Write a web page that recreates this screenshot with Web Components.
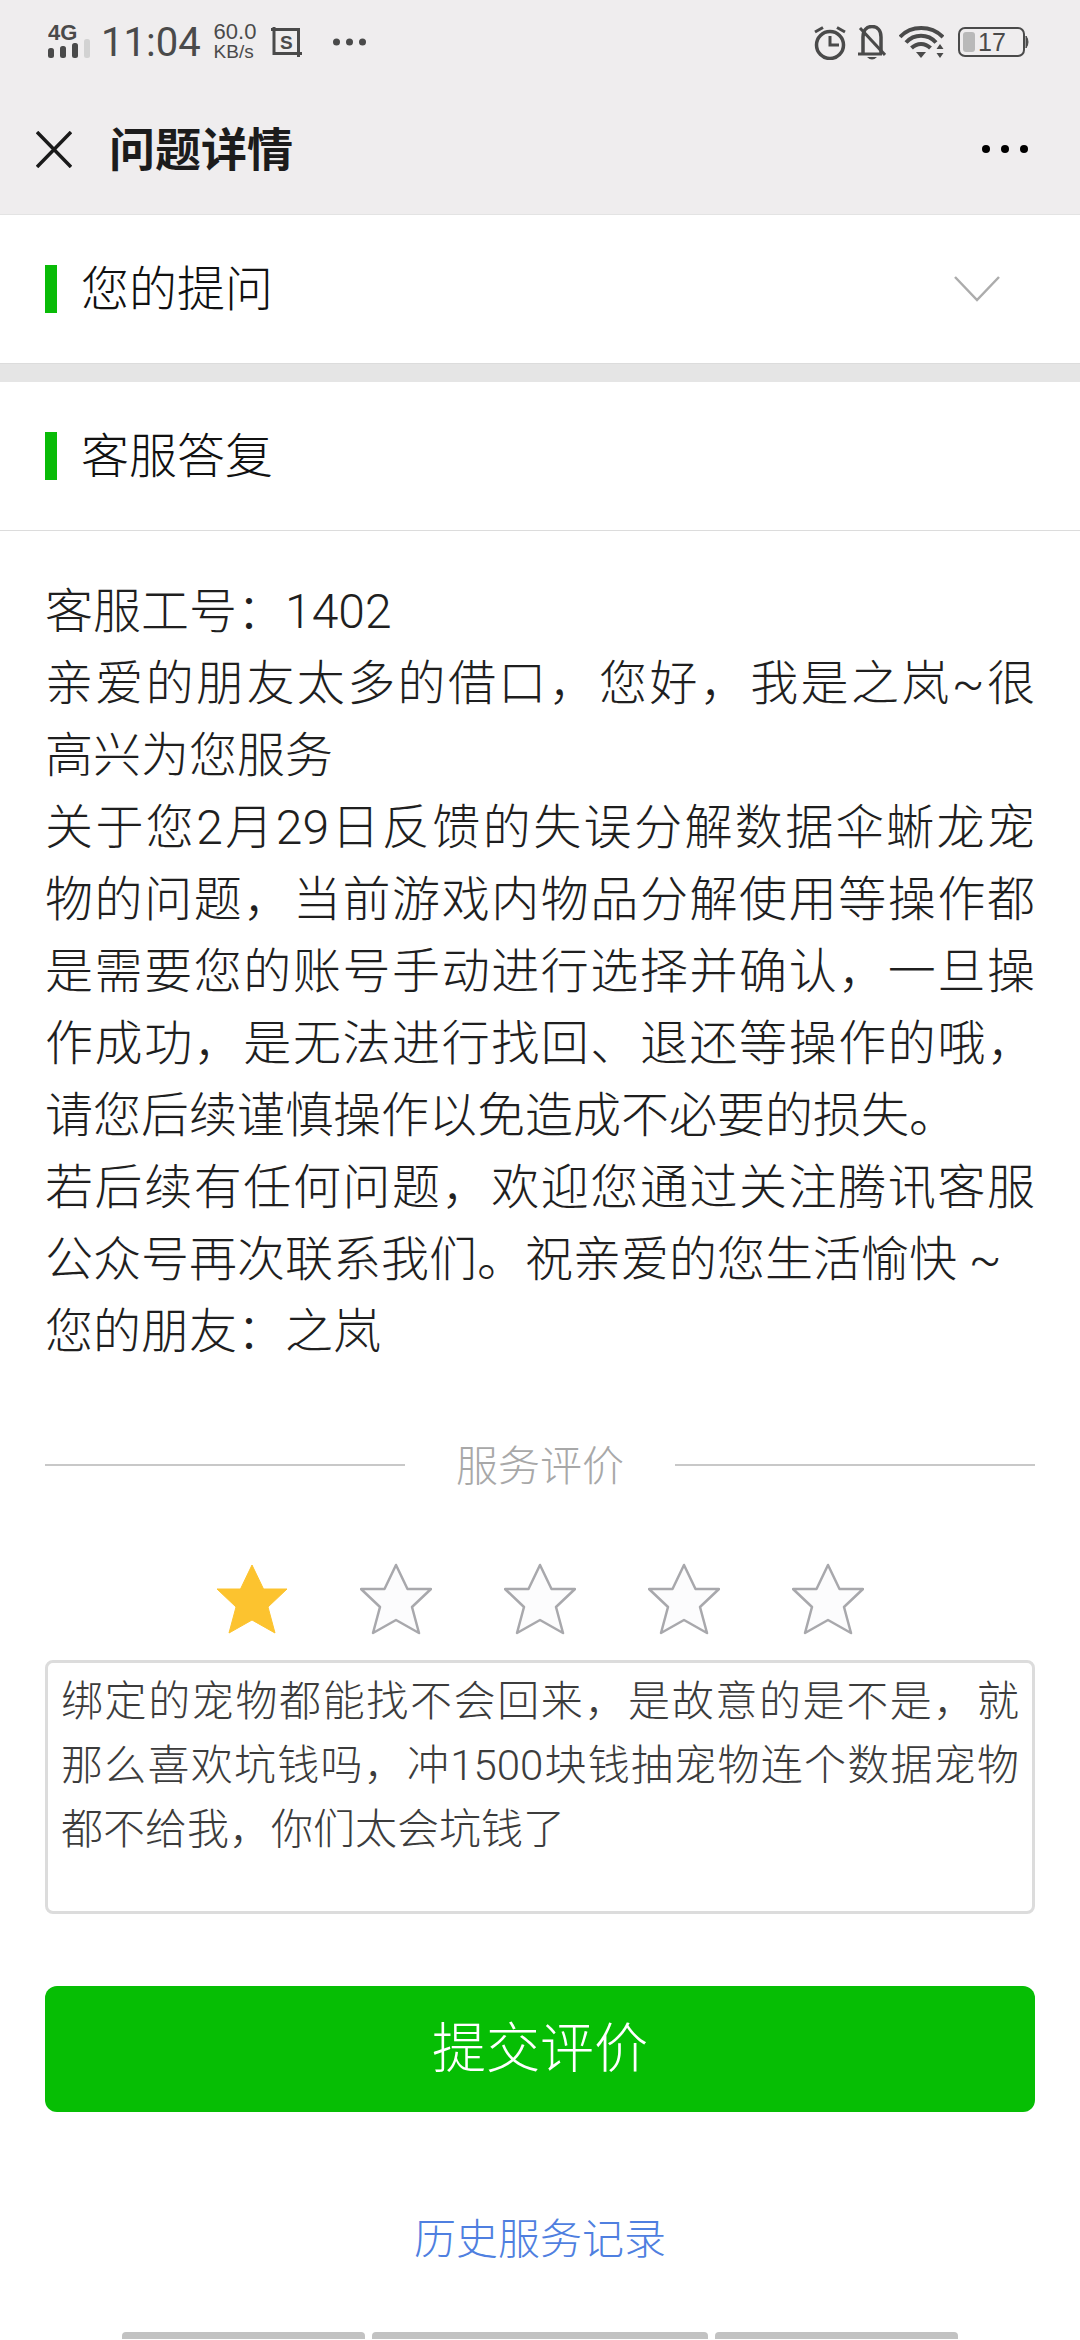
<!DOCTYPE html>
<html lang="zh">
<head>
<meta charset="utf-8">
<title>问题详情</title>
<style>
  html, body { margin: 0; padding: 0; background: #fff; }
  body { font-family: "Noto Sans CJK SC", "Liberation Sans", sans-serif; width: 1080px; height: 2340px; overflow: hidden; }
  review-box div { white-space: nowrap; }
  review-box .fit { text-align: justify; text-align-last: justify; white-space: normal; }
</style>
</head>
<body>
<app-header></app-header>
<section-title collapsible>您的提问</section-title>
<section-title>客服答复</section-title>
<answer-text></answer-text>
<rating-divider>服务评价</rating-divider>
<star-rating value="1"></star-rating>
<review-box>
  <div class="fit">绑定的宠物都能找不会回来，是故意的是不是，就</div>
  <div class="fit">那么喜欢坑钱吗，冲1500块钱抽宠物连个数据宠物</div>
  <div>都不给我，你们太会坑钱了</div>
</review-box>
<submit-button>提交评价</submit-button>
<history-link>历史服务记录</history-link>
<home-bars></home-bars>

<script>
class AppHeader extends HTMLElement {
  constructor () {
    super()
    this.shadow = this.attachShadow({ mode: 'open' })
  }

  connectedCallback () {
    this.shadow.innerHTML = `
      <style>
        :host { display: block; height: 214px; background: #efedee; border-bottom: 1px solid #e3e3e3; }
        .status { height: 84px; display: flex; align-items: center; padding: 0 51px 0 48px; color: #4a4a4a; font-family: Roboto, "Liberation Sans", sans-serif; }
        .status .left, .status .right { display: flex; align-items: center; }
        .status .right { margin-left: auto; }
        .time { font-size: 40px; margin-left: 11px; }
        .speed { font-family: "Liberation Sans", sans-serif; font-size: 19px; line-height: 20px; margin-left: 13px; display: flex; flex-direction: column; }
        .speed b { font-weight: 400; font-size: 22px; }
        .bar { height: 130px; display: flex; align-items: center; padding: 0 52px 0 36px; }
        h1 { margin: 0 0 6px 37px; font: 700 46px/1 "Noto Sans CJK SC", sans-serif; color: #1c1c1c; }
        .more { margin-left: auto; display: flex; gap: 11px; }
        .more i { width: 8px; height: 8px; border-radius: 50%; background: #000; }
      </style>
      <div class="status">
        <div class="left">
          <svg width="42" height="48" viewBox="0 -4 42 48">
            <text x="0" y="18" font-family="Liberation Sans" font-weight="700" font-size="22" fill="#4a4a4a">4G</text>
            <g fill="#4a4a4a"><rect x="0" y="26" width="6" height="10" rx="2.500"/><rect x="12" y="24" width="6" height="12" rx="2.500"/><rect x="24" y="21" width="6" height="15" rx="2.500"/></g>
            <rect x="36" y="17" width="6" height="19" rx="2.500" fill="#d2d2d2"/>
          </svg>
          <span class="time">11:04</span>
          <span class="speed"><b>60.0</b><span>KB/s</span></span>
          <svg width="31" height="30" viewBox="0 0 31 30" style="margin-left:15px" fill="none" stroke="#4a4a4a" stroke-width="3">
            <path d="M0 2.500H27.500V30M3 0V26.500H31"/>
            <text x="9" y="22" font-family="Liberation Sans" font-weight="700" font-size="19" fill="#4a4a4a" stroke="none">S</text>
          </svg>
          <svg width="33" height="8" viewBox="0 0 33 8" style="margin-left:31px" fill="#4a4a4a"><circle cx="3.500" cy="4" r="3.500"/><circle cx="16.500" cy="4" r="3.500"/><circle cx="29.500" cy="4" r="3.500"/></svg>
        </div>
        <div class="right">
          <svg width="32" height="35" viewBox="0 0 32 35" fill="none" stroke="#4a4a4a" stroke-width="3.500">
            <circle cx="16" cy="20" r="13.500"/>
            <path d="M16 11v9h9" stroke-width="3"/>
            <path d="M1 7l8-4.500M31 7l-8-4.500" stroke-width="3"/>
          </svg>
          <svg width="28" height="35" viewBox="0 0 28 35" style="margin-left:12px" fill="none" stroke="#4a4a4a" stroke-width="3.500">
            <path d="M5 28V12C5 5 9 1.500 14 1.500S23 5 23 12V28"/>
            <path d="M0 29H24" stroke-width="3"/>
            <path d="M9 32h10q-5 5-10 0z" fill="#4a4a4a" stroke="none"/>
            <path d="M2 3l25 27" stroke-width="3"/>
          </svg>
          <svg width="45" height="33" viewBox="0 0 45 33" style="margin-left:13px" fill="none" stroke="#4a4a4a" stroke-width="4">
            <path d="M1 11C12 -1 32 -1 44 11"/>
            <path d="M7 16.500C15 7.500 29 7.500 37 16.500"/>
            <path d="M12.500 22C18 16.500 26 16.500 31.500 22"/>
            <path d="M17 26h10l-5 6z" fill="#4a4a4a" stroke="none"/>
            <path d="M41 18l3.500 5h-7zM41 32l3.500-5h-7z" fill="#4a4a4a" stroke="none"/>
          </svg>
          <svg width="71" height="30" viewBox="0 0 71 30" style="margin-left:14px" fill="none">
            <rect x="1" y="1" width="65" height="28" rx="6" stroke="#4a4a4a" stroke-width="2"/>
            <rect x="5" y="5" width="12" height="20" rx="3" fill="#b9b9b9"/>
            <path d="M68 9q4 6 0 12z" fill="#4a4a4a" stroke="#4a4a4a" stroke-width="1"/>
            <text x="20" y="24" font-family="Liberation Sans" font-size="25" fill="#4a4a4a">17</text>
          </svg>
        </div>
      </div>
      <div class="bar">
        <svg width="36" height="37" viewBox="0 0 36 37" fill="none" stroke="#1a1a1a" stroke-width="3.500"><path d="M1 1l34 35M35 1L1 36"/></svg>
        <h1>问题详情</h1>
        <div class="more"><i></i><i></i><i></i></div>
      </div>
    `
  }
}

class SectionTitle extends HTMLElement {
  constructor () {
    super()
    this.shadow = this.attachShadow({ mode: 'open' })
  }

  connectedCallback () {
    const arrow = this.hasAttribute('collapsible')
      ? '<svg class="arrow" width="46" height="26" viewBox="0 0 46 26" fill="none" stroke="#acacac" stroke-width="2.500"><path d="M1 1l22 23L45 1"/></svg>'
      : ''
    this.shadow.innerHTML = `
      <style>
        :host { display: block; background: #fff; border-bottom: 1px solid #dcdcdc; }
        :host([collapsible]) { margin-bottom: 18px; box-shadow: 0 18px 0 #e5e5e5; }
        .row { height: 148px; display: flex; align-items: center; padding: 0 80px 0 45px; }
        .mark { width: 12px; height: 48px; background: #09bb07; margin-right: 24px; }
        .label { font-size: 48px; line-height: 48px; font-weight: 300; padding-bottom: 8px; color: #111; }
        .arrow { margin-left: auto; }
      </style>
      <div class="row"><span class="mark"></span><span class="label"><slot></slot></span>${arrow}</div>
    `
  }
}

class AnswerText extends HTMLElement {
  constructor () {
    super()
    this.shadow = this.attachShadow({ mode: 'open' })
  }

  connectedCallback () {
    const lines = [
      ['客服工号：1402'],
      ['亲爱的朋友太多的借口，您好，我是之岚~很', 1],
      ['高兴为您服务'],
      ['关于您2月29日反馈的失误分解数据伞蜥龙宠', 1],
      ['物的问题，当前游戏内物品分解使用等操作都', 1],
      ['是需要您的账号手动进行选择并确认，一旦操', 1],
      ['作成功，是无法进行找回、退还等操作的哦，', 1],
      ['请您后续谨慎操作以免造成不必要的损失。'],
      ['若后续有任何问题，欢迎您通过关注腾讯客服', 1],
      ['公众号再次联系我们。祝亲爱的您生活愉快 ~'],
      ['您的朋友：之岚']
    ]
    this.shadow.innerHTML = `
      <style>
        :host { display: block; padding: 45px 45px 0; margin-bottom: -5px; font-family: Roboto, "Noto Sans CJK SC", sans-serif; font-size: 48px; line-height: 72px; font-weight: 300; color: #1f1f1f; }
        .fit { text-align: justify; text-align-last: justify; }
      </style>
      ${lines.map(l => `<div class="${l[1] ? 'fit' : ''}">${l[0]}</div>`).join('')}
    `
  }
}

class RatingDivider extends HTMLElement {
  constructor () {
    super()
    this.shadow = this.attachShadow({ mode: 'open' })
  }

  connectedCallback () {
    this.shadow.innerHTML = `
      <style>
        :host { display: flex; align-items: center; margin: 72px 45px 0; height: 60px; font-size: 42px; font-weight: 300; color: #a8a8a8; }
        .line { flex: 1; height: 2px; background: #c8c8c8; }
        span { padding: 0 51px 6px; }
      </style>
      <div class="line"></div><span><slot></slot></span><div class="line"></div>
    `
  }
}

class StarRating extends HTMLElement {
  constructor () {
    super()
    this.shadow = this.attachShadow({ mode: 'open' })
  }

  connectedCallback () {
    const value = Number(this.getAttribute('value'))
    let stars = ''
    for (let i = 1; i <= 5; i++) {
      const on = i <= value
      stars += `<svg width="72" height="72" viewBox="0 0 72 72"><path d="M36 2l11.500 24H71L52 44l7 26-23-13-23 13 7-26L1 26h23.500z" fill="${on ? '#fcc32f' : '#fcfcfd'}" stroke="${on ? '#fcc32f' : '#a8a8ac'}" stroke-width="${on ? 1 : 2.500}" stroke-linejoin="round"/></svg>`
    }
    this.shadow.innerHTML = `
      <style>
        :host { display: flex; justify-content: center; gap: 72px; margin-top: 68px; }
      </style>
      ${stars}
    `
  }
}

class ReviewBox extends HTMLElement {
  constructor () {
    super()
    this.shadow = this.attachShadow({ mode: 'open' })
  }

  connectedCallback () {
    this.shadow.innerHTML = `
      <style>
        :host { display: block; box-sizing: border-box; margin: 25px 45px 0; height: 254px; padding: 7px 13px 0; border: 3px solid #dcdcdc; border-radius: 8px; font-family: Roboto, "Noto Sans CJK SC", sans-serif; font-size: 42px; line-height: 64px; font-weight: 300; color: #3c3c3c; }
      </style>
      <slot></slot>
    `
  }
}

class SubmitButton extends HTMLElement {
  constructor () {
    super()
    this.shadow = this.attachShadow({ mode: 'open' })
  }

  connectedCallback () {
    this.shadow.innerHTML = `
      <style>
        :host { display: flex; align-items: center; justify-content: center; box-sizing: border-box; margin: 72px 45px 0; height: 126px; padding-bottom: 10px; background: #06be04; border-radius: 12px; color: #fff; font-size: 54px; font-weight: 300; }
      </style>
      <slot></slot>
    `
  }
}

class HistoryLink extends HTMLElement {
  constructor () {
    super()
    this.shadow = this.attachShadow({ mode: 'open' })
  }

  connectedCallback () {
    this.shadow.innerHTML = `
      <style>
        :host { display: block; margin-top: 94px; text-align: center; font-size: 42px; line-height: 60px; font-weight: 300; color: #4f7fe0; }
      </style>
      <slot></slot>
    `
  }
}

class HomeBars extends HTMLElement {
  constructor () {
    super()
    this.shadow = this.attachShadow({ mode: 'open' })
  }

  connectedCallback () {
    this.shadow.innerHTML = `
      <style>
        :host { display: flex; justify-content: center; gap: 7px; margin-top: 66px; }
        i { height: 7px; background: #c2c2c2; border-radius: 4px 4px 0 0; }
      </style>
      <i style="width:243px"></i><i style="width:336px"></i><i style="width:243px"></i>
    `
  }
}

customElements.define('app-header', AppHeader)
customElements.define('section-title', SectionTitle)
customElements.define('answer-text', AnswerText)
customElements.define('rating-divider', RatingDivider)
customElements.define('star-rating', StarRating)
customElements.define('review-box', ReviewBox)
customElements.define('submit-button', SubmitButton)
customElements.define('history-link', HistoryLink)
customElements.define('home-bars', HomeBars)
</script>
</body>
</html>
